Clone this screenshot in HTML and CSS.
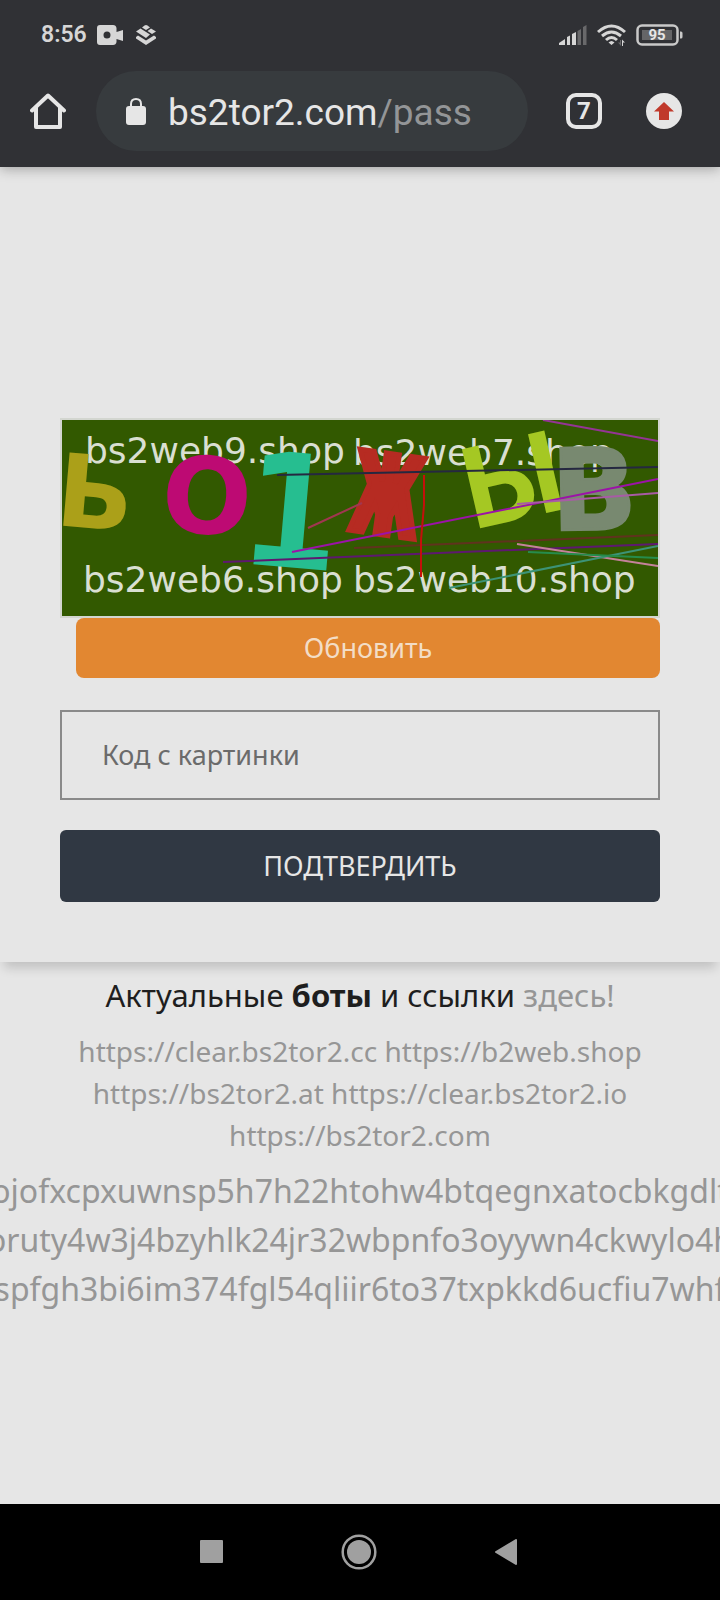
FILE: index.html
```html
<!DOCTYPE html>
<html lang="ru">
<head>
<meta charset="utf-8">
<meta name="viewport" content="width=device-width, initial-scale=1">
<title>pass</title>
<link rel="stylesheet" href="styles.css">
</head>
<body>
<header class="browser">
  <div class="status">
    <span class="clock">8:56</span>
    <svg class="cam" width="27" height="20" viewBox="0 0 27 20"><path fill="#d6d6d6" fill-rule="evenodd" d="M3 0H16Q19 0 19.500 3V7L26 5V16L19.500 14V17Q19 20 16 20H3Q0 20 0 17V3Q0 0 3 0ZM10 6.500A3.500 3.500 0 1 0 10 13.500A3.500 3.500 0 1 0 10 6.500Z"/></svg>
    <svg class="layers" width="20" height="20" viewBox="0 0 20 20"><path fill="#d6d6d6" d="M6 2.500 8.500 .500Q10-.500 11.500 .500L14 2.500 10 5ZM11.500 6 15 3.500 20 6.500 16 9ZM0 6.500 4.500 3.500 14 9.500 10 13ZM0 12 2 10.500 10 15.500 18 10.500 20 12V13.500L10 20 0 13.500Z"/></svg>
    <span class="spacer"></span>
    <svg class="signal" width="28" height="20" viewBox="0 0 28 20"><g fill="#d6d6d6"><path d="M0 20V18L6 14V20ZM8 20V12L11 10.500V20ZM13 20V9L17 7V20Z"/></g><path fill="#69696b" d="M18.500 20V6L22 4V20ZM24 20V2L27.500 0V20Z"/></svg>
    <svg class="wifi" width="30" height="22" viewBox="0 0 30 22"><g fill="none" stroke="#d6d6d6" stroke-width="3"><path d="M1 8Q14.500-4 28 8M5 12Q14.500 4 24 12M9 16Q14.500 11 20 16"/></g><path fill="#d6d6d6" d="M11.500 18.500Q14.500 15.500 17.500 18.500L14.500 21ZM25 15.500 28 18.500H26V22H25Z"/><path fill="#69696b" d="M24 22 21 18.500H23V16H24Z"/></svg>
    <svg class="battery" width="47" height="22" viewBox="0 0 47 22"><rect x="1.500" y="1.500" width="40" height="19" rx="4.500" fill="none" stroke="#c9c9c9" stroke-width="2.500"/><rect x="6" y="6" width="30" height="10" fill="#656567"/><path d="M44 7.500H45Q46.500 7.500 46.500 9V13Q46.500 14.500 45 14.500H44Z" fill="#c9c9c9"/><text class="charge" x="21" y="16" text-anchor="middle">95</text></svg>
  </div>
  <div class="toolbar">
    <button class="tool" aria-label="Home"><svg width="36" height="36" viewBox="0 0 36 36"><path fill="none" stroke="#e6e6e6" stroke-width="4" stroke-linejoin="round" stroke-linecap="round" d="M2 17.500 18 2.500 34 17.500M6 15V34H30V15"/></svg></button>
    <div class="address">
      <svg width="20" height="27" viewBox="0 0 20 27"><rect y="8" width="20" height="19" rx="3" fill="#e6e6e6"/><path d="M5 9V6Q5 1 10 1T15 6V9" fill="none" stroke="#e6e6e6" stroke-width="2"/></svg>
      <span class="url">bs2tor2.com<span class="path">/pass</span></span>
    </div>
    <div class="actions">
      <button class="tool tabs" aria-label="Tabs">7</button>
      <button class="tool" aria-label="Update"><svg width="36" height="36" viewBox="0 0 36 36"><circle cx="18" cy="18" r="18" fill="#e6e6e6"/><path fill="#c0392b" d="M18 9 28 18.500H23V27H13V18.500H8Z"/></svg></button>
    </div>
  </div>
</header>
<main class="page">
  <form class="panel" onsubmit="return false">
    <svg class="captcha" viewBox="0 0 596 196" role="img" aria-label="Код">
      <rect width="596" height="196" fill="#325900"/>
      <g class="sites">
        <text x="23" y="43">bs2web9.shop</text><text x="291" y="45">bs2web7.shop</text>
        <text x="21" y="172">bs2web6.shop</text><text x="291" y="172">bs2web10.shop</text>
      </g>
      <g class="code">
        <text transform="translate(-8 105) rotate(5)" font-size="101" fill="#aba019">Ь</text>
        <text transform="translate(98 111) rotate(3)" font-size="106" fill="#bd0a73">О</text>
        <text class="mono" transform="translate(177 143) rotate(5)" font-size="158" fill="#26be90">1</text>
        <text class="mono" transform="translate(286 110) rotate(8)" font-size="112" stroke="#b62b22" stroke-width="5" fill="#b62b22">Ж</text>
        <text class="wide" transform="translate(411 110) rotate(-13)" font-size="114" fill="#a5c823">Ы</text>
        <text transform="translate(490 110) rotate(-1)" font-size="112" stroke="#788970" stroke-width="3" fill="#788970">В</text>
      </g>
      <g fill="none" stroke-width="2">
        <path stroke="#252840" d="M215 55 596 47"/>
        <path stroke="#a13650" d="M246 108 300 83"/>
        <path stroke="#9c12a8" d="M230 132 596 59"/>
        <path stroke="#5e1870" d="M161 142 596 124"/>
        <path stroke="#60331e" d="M292 128 596 115"/>
        <path stroke="#943494" d="M481 0 596 21"/>
        <path stroke="#a85ba5" d="M455 84 596 73"/>
        <path stroke="#c50f0b" d="M362 55V85L359 120V157"/>
        <path stroke="#c5829b" d="M455 124 596 146"/>
        <path stroke="#3c9376" d="M387 168 596 126"/>
        <path stroke="#268c4c" d="M466 132 596 138"/>
      </g>
    </svg>
    <button class="refresh" type="button">Обновить</button>
    <input class="answer" type="text" aria-label="Код с картинки" placeholder="Код с картинки">
    <button class="submit" type="submit">ПОДТВЕРДИТЬ</button>
  </form>
  <section class="links">
    <p class="lead">Актуальные <b>боты</b> и ссылки <a href="#">здесь!</a></p>
    <p class="mirrors"><a href="#">https://clear.bs2tor2.cc</a> <a href="#">https://b2web.shop</a><br><a href="#">https://bs2tor2.at</a> <a href="#">https://clear.bs2tor2.io</a><br><a href="#">https://bs2tor2.com</a></p>
    <div class="long">
      <a href="#">ojofxcpxuwnsp5h7h22htohw4btqegnxatocbkgdlt</a>
      <a href="#">oruty4w3j4bzyhlk24jr32wbpnfo3oyywn4ckwylo4h</a>
      <a href="#">spfgh3bi6im374fgl54qliir6to37txpkkd6ucfiu7whf</a>
    </div>
  </section>
</main>
<nav class="system">
  <button class="tool" aria-label="Recent"><svg width="24" height="24" viewBox="0 0 24 24"><rect width="23" height="23" rx="1" fill="#a0a0a0"/></svg></button>
  <button class="tool" aria-label="Home screen"><svg width="36" height="36" viewBox="0 0 36 36"><circle cx="18" cy="18" r="16.300" fill="none" stroke="#a0a0a0" stroke-width="2.500"/><circle cx="18" cy="18" r="12" fill="#a0a0a0"/></svg></button>
  <button class="tool" aria-label="Back"><svg width="24" height="26" viewBox="0 0 24 26"><path fill="#a0a0a0" stroke="#a0a0a0" stroke-width="2" stroke-linejoin="round" d="M22 1V25L2 13Z"/></svg></button>
</nav>
</body>
</html>
```
FILE: styles.css
```css
* { box-sizing: border-box; }
body {
  margin: 0;
  min-height: 100vh;
  display: flex;
  flex-direction: column;
  background: #e6e6e6;
  color: #1e1e1e;
  font-family: "Noto Sans", sans-serif;
}
button, input { font: inherit; }
svg { display: block; flex: none; }
a { color: #969696; text-decoration: none; }

.browser {
  position: relative;
  background: #303135;
  padding-bottom: 16px;
  box-shadow: 0 2px 12px rgba(0, 0, 0, .3);
  font-family: Roboto, sans-serif;
}
.status {
  display: flex;
  align-items: center;
  height: 71px;
  padding: 0 37px 2px 41px;
}
.clock { color: #d6d6d6; font-size: 23px; font-weight: 600; }
.cam { margin-left: 10px; }
.layers { margin-left: 12px; }
.spacer { flex: 1; }
.signal { margin-right: 10px; }
.wifi { margin-right: 9px; }
.charge { fill: #e6e6e6; font-size: 15px; font-weight: 700; }
.toolbar { display: flex; align-items: center; padding: 0 38px 0 30px; }
.tool { border: 0; padding: 0; background: none; }
.address {
  flex: 1;
  min-width: 0;
  height: 80px;
  margin: 0 38px 0 30px;
  padding-left: 30px;
  display: flex;
  align-items: center;
  gap: 22px;
  border-radius: 40px;
  background: #373b3e;
}
.url { padding-top: 3px; color: #e6e6e6; font-size: 37px; }
.path { color: #939597; }
.actions { display: flex; gap: 44px; }
.tabs {
  width: 36px;
  height: 36px;
  border: 4px solid #e6e6e6;
  border-radius: 10px;
  color: #e6e6e6;
  font-size: 24px;
  font-weight: 700;
  line-height: 28px;
}

.page { flex: 1; }
.panel {
  display: flex;
  flex-direction: column;
  padding: 251px 60px 60px;
  box-shadow: 0 10px 10px -4px rgba(0, 0, 0, .16);
}
.captcha { width: 100%; border: 2px solid #d3d6d0; }
.sites { font-family: "DejaVu Sans", sans-serif; font-size: 36px; fill: #d9dfd2; }
.code { font-family: "DejaVu Sans", sans-serif; font-weight: 700; }
.mono { font-family: "DejaVu Sans Mono", monospace; }
.wide { font-family: Roboto, sans-serif; }
.refresh {
  height: 60px;
  margin-left: 16px;
  border: 0;
  border-radius: 8px;
  background: #e28731;
  color: #f3ddc6;
  padding-bottom: 3px;
  font-size: 27px;
}
.answer {
  width: 100%;
  height: 90px;
  margin: 32px 0 30px;
  padding: 0 40px 2px;
  border: 2px solid #8a8a8a;
  border-radius: 0;
  background: transparent;
  color: #1e1e1e;
  font-size: 27px;
}
.answer::placeholder { color: #6b6b6b; opacity: 1; }
.submit {
  height: 72px;
  padding-bottom: 3px;
  border: 0;
  border-radius: 6px;
  background: #303843;
  color: #e6e6e6;
  font-size: 27px;
}
.links { padding-top: 10px; text-align: center; overflow: hidden; }
.lead { margin: 0 0 12px; font-size: 31px; line-height: 46px; }
.mirrors { margin: 0 0 10px; font-size: 28px; line-height: 42px; }
.long { font-size: 32px; line-height: 49px; }
.long a { display: flex; justify-content: center; white-space: nowrap; }

.system {
  display: flex;
  justify-content: center;
  align-items: center;
  gap: 117px;
  height: 96px;
  padding-right: 2px;
  background: #000;
}
```
